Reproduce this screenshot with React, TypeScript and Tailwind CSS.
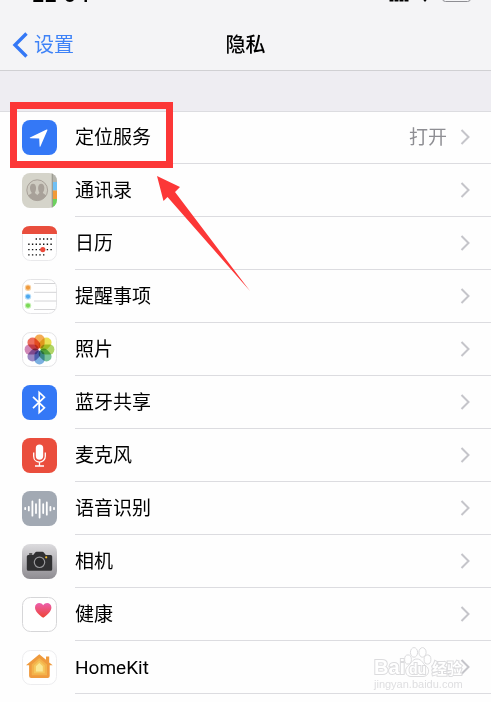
import type { ReactNode } from "react";

const tile = "h-[35px] w-[35px] shrink-0";

function LocationIcon() {
  return (
    <svg viewBox="0 0 35 35" className={tile}>
      <rect width="35" height="35" rx="8" fill="#3478f6" />
      <path d="M8 17.6 24.6 9.6Q25.8 9.2 25.3 10.5L18.4 26.4Q17.8 27.4 17.6 26.2L17.2 18.4 8.4 18.3Q7.2 18 8 17.6Z" fill="#fff" />
    </svg>
  );
}

function ContactsIcon() {
  return (
    <svg viewBox="0 0 35 35" className={tile}>
      <defs>
        <clipPath id="contacts-tile">
          <rect width="35" height="35" rx="8" />
        </clipPath>
      </defs>
      <g clipPath="url(#contacts-tile)">
        <rect width="35" height="35" fill="#d5d4ca" />
        <rect x="30.5" width="5" height="9" fill="#b5b5ad" />
        <rect x="30.5" y="9" width="5" height="8.5" fill="#6fc0f5" />
        <rect x="30.5" y="17.5" width="5" height="8.5" fill="#f19a38" />
        <rect x="30.5" y="26" width="5" height="9" fill="#6cd25e" />
        <path d="M30.3 0V35" stroke="#99998f" strokeWidth="1.2" />
      </g>
      <circle cx="15.2" cy="17.2" r="10.4" fill="#cfccc2" stroke="#a8a199" />
      <path
        d="M6.3 22.4C8 20.8 9.6 21 9.7 19.7 7.3 17 7.2 10.8 11 10.7 14.8 10.8 14.6 17 12.9 19.5 12.9 21 15 20.9 15.3 22.2 15.7 20.8 17.5 20.7 17.4 19.4 15.6 17 15.4 10.8 19.2 10.7 23 10.8 23.1 17 20.8 19.6 20.9 21 22.6 20.9 24.2 22.4 22.5 25.4 19.2 27.4 15.2 27.4 11.2 27.4 7.9 25.4 6.3 22.4Z"
        fill="#a8a199"
      />
      <path d="M15 11.5V20" stroke="#cfccc2" strokeWidth="1" />
    </svg>
  );
}

function CalendarIcon() {
  return (
    <svg viewBox="0 0 35 35" className={tile}>
      <rect x=".5" y=".5" width="34" height="34" rx="8" fill="#fff" stroke="#e9e9eb" />
      <path d="M0 8Q0 0 8 0H27Q35 0 35 8Z" fill="#e94e3d" />
      <g stroke="#111" strokeWidth="1.4" strokeDasharray="1.4 2.3">
        <path d="M13.6 13H30" />
        <path d="M6.2 18.3H30" />
        <path d="M6.2 23.6H30" />
        <path d="M6.2 28.9H23" />
      </g>
      <circle cx="20.8" cy="23.6" r="2.6" fill="#ec4b3c" />
    </svg>
  );
}

function RemindersIcon() {
  return (
    <svg viewBox="0 0 35 35" className={tile}>
      <rect x=".5" y=".5" width="34" height="34" rx="8" fill="#fff" stroke="#e4e4e6" />
      <path d="M12 4.5H33M12 13.3H34.5M12 22H34.5M12 30.5H33" stroke="#d4d4d6" />
      <circle cx="6" cy="8.7" r="3.2" fill="#f8d3a6" />
      <circle cx="6" cy="8.7" r="2.1" fill="#ef9a3d" />
      <circle cx="6" cy="17.6" r="3.2" fill="#b5ddf9" />
      <circle cx="6" cy="17.6" r="2.1" fill="#4ea9ef" />
      <circle cx="6" cy="26.6" r="3.2" fill="#c6f0b5" />
      <circle cx="6" cy="26.6" r="2.1" fill="#7bd957" />
    </svg>
  );
}

const petals = ["#f2a03c", "#e6dc3c", "#a5cf52", "#63b98a", "#6aa5dd", "#8c78bb", "#c978ae", "#ea5a47"];

function PhotosIcon() {
  return (
    <svg viewBox="0 0 35 35" className={tile}>
      <rect x=".5" y=".5" width="34" height="34" rx="8" fill="#fff" stroke="#e4e4e6" />
      <g className="isolate">
        {petals.map((color, i) => (
          <rect
            key={color}
            x="12.4"
            y="2.6"
            width="10.2"
            height="14"
            rx="5"
            fill={color}
            fillOpacity=".88"
            className="mix-blend-multiply"
            transform={`rotate(${i * 45} 17.5 17.5)`}
          />
        ))}
      </g>
      <circle cx="17.5" cy="17.5" r="1" fill="#fff" />
    </svg>
  );
}

function BluetoothIcon() {
  return (
    <svg viewBox="0 0 35 35" className={tile}>
      <rect width="35" height="35" rx="8" fill="#3478f6" />
      <path d="M11 11.8 22.4 22.8 17.2 27.6V7.4L22.4 12.2 11 23.2" fill="none" stroke="#fff" strokeWidth="1.7" />
    </svg>
  );
}

function MicrophoneIcon() {
  return (
    <svg viewBox="0 0 35 35" className={tile}>
      <rect width="35" height="35" rx="8" fill="#ea4e3d" />
      <rect x="13.8" y="6.4" width="7.4" height="15.4" rx="3.7" fill="#fff" />
      <path d="M11.7 14.5V18.2C11.7 26 23.3 26 23.3 18.2V14.5M17.5 24V27.8M13 28H22" fill="none" stroke="#fff" strokeWidth="1.3" />
    </svg>
  );
}

function SpeechIcon() {
  return (
    <svg viewBox="0 0 35 35" className={tile}>
      <rect width="35" height="35" rx="8" fill="#a2a9b3" />
      <path
        d="M3.2 17V18.2M6.8 15.8V19.4M10.4 10.5V24.7M14 13.2V22M17.6 8.6V26.6M21.2 13.2V22M24.8 11.5V23.7M28.4 15.8V19.4M32 17V18.2"
        stroke="#fff"
        strokeWidth="1.8"
        strokeLinecap="round"
      />
    </svg>
  );
}

function CameraIcon() {
  return (
    <svg viewBox="0 0 35 35" className={tile}>
      <defs>
        <linearGradient id="camera-tile" x2="0" y2="1">
          <stop stopColor="#dcdbde" />
          <stop offset="1" stopColor="#8e8c91" />
        </linearGradient>
      </defs>
      <rect width="35" height="35" rx="8" fill="url(#camera-tile)" />
      <rect x="7" y="9" width="3.4" height="2" rx=".8" fill="#555" />
      <path d="M6.3 11H11.2L13.2 8.4Q13.7 7.8 14.5 7.8H20.5Q21.3 7.8 21.8 8.4L23.8 11H28.7Q30.2 11 30.2 12.5V25.3Q30.2 26.8 28.7 26.8H6.3Q4.8 26.8 4.8 25.3V12.5Q4.8 11 6.3 11Z" fill="#303032" />
      <circle cx="17.5" cy="18.3" r="5.2" fill="#29292b" stroke="#98989b" strokeWidth="1.2" />
      <circle cx="24.2" cy="13.3" r="1.1" fill="#f5c02f" />
    </svg>
  );
}

function HealthIcon() {
  return (
    <svg viewBox="0 0 35 35" className={tile}>
      <defs>
        <linearGradient id="heart" x2="0" y2="1">
          <stop stopColor="#ec5fae" />
          <stop offset="1" stopColor="#ee4433" />
        </linearGradient>
      </defs>
      <rect x=".5" y=".5" width="34" height="34" rx="8" fill="#fff" stroke="#d6d6d8" />
      <path d="M21.2 20.8C17 17.6 13 14.4 13 10.4 13 5.4 19 4.4 21.2 8.2 23.4 4.4 29.4 5.4 29.4 10.4 29.4 14.4 25.4 17.6 21.2 20.8Z" fill="url(#heart)" />
    </svg>
  );
}

function HomeIcon() {
  return (
    <svg viewBox="0 0 35 35" className={tile}>
      <rect x=".5" y=".5" width="34" height="34" rx="8" fill="#fff" stroke="#ededef" />
      <path d="M17.3 4.2 24 9.8V6.4H27.2V12.4L30.7 15.2H27.7V26Q27.7 28 25.7 28H9.1Q7.1 28 7.1 26V15.2H4Z" fill="#ef9a3d" />
      <path d="M17.3 8 25 14.6V25.3H9.7V14.6Z" fill="#f3b24b" />
      <path d="M17.3 10.6 22.8 15.4V23.2H11.9V15.4Z" fill="#f6c65c" />
      <path d="M17.3 13 20.8 16.3V21.4H13.9V16.3Z" fill="#fae793" />
    </svg>
  );
}

function Chevron() {
  return (
    <svg viewBox="0 0 10 16" className="h-4 w-2.5 shrink-0" fill="none" stroke="#c5c5ca" strokeWidth="2">
      <path d="M1.5 1 8.5 8 1.5 15" />
    </svg>
  );
}

function Watermark() {
  return (
    <svg
      viewBox="0 0 100 50"
      className="pointer-events-none absolute top-1 right-6 h-[50px] w-[100px]"
      fill="#fff"
      stroke="#dcdcde"
      fontFamily='"Liberation Sans", "Noto Sans CJK SC", sans-serif'
    >
      <text x="7" y="29" fontSize="20" fontWeight="700" paintOrder="stroke" strokeWidth="2">
        Bai
      </text>
      <ellipse cx="41" cy="14.5" rx="3.4" ry="4.6" />
      <ellipse cx="47" cy="7.4" rx="3.6" ry="4.8" />
      <ellipse cx="55.5" cy="7.4" rx="3.6" ry="4.8" />
      <ellipse cx="60.5" cy="14.5" rx="3.4" ry="4.6" />
      <path d="M50 14C55 14 56 19 59.5 21.5 63.5 25 61.5 31.5 56 31.5H44C38.5 31.5 37 25 40.5 21.5 44 19 45 14 50 14Z" />
      <text x="42" y="29" fontSize="14" fontWeight="700" paintOrder="stroke" strokeWidth="2">
        du
      </text>
      <text x="65" y="29" fontSize="15" fontWeight="700" paintOrder="stroke" strokeWidth="2">
        经验
      </text>
      <text x="7" y="43" fontSize="11" fill="#dedee0" stroke="none">
        jingyan.baidu.com
      </text>
    </svg>
  );
}

type Item = { label: string; icon: ReactNode; value?: string };

const items: Item[] = [
  { label: "定位服务", icon: <LocationIcon />, value: "打开" },
  { label: "通讯录", icon: <ContactsIcon /> },
  { label: "日历", icon: <CalendarIcon /> },
  { label: "提醒事项", icon: <RemindersIcon /> },
  { label: "照片", icon: <PhotosIcon /> },
  { label: "蓝牙共享", icon: <BluetoothIcon /> },
  { label: "麦克风", icon: <MicrophoneIcon /> },
  { label: "语音识别", icon: <SpeechIcon /> },
  { label: "相机", icon: <CameraIcon /> },
  { label: "健康", icon: <HealthIcon /> },
  { label: "HomeKit", icon: <HomeIcon /> },
];

function StatusBar() {
  return (
    <div className="-mt-4 flex h-[18px] items-end justify-between pr-5 pl-8">
      <span className="font-[Inter] text-xl leading-[14px] font-semibold">22:04</span>
      <svg viewBox="0 0 84 18" className="h-[18px] w-[84px]">
        <path d="M4.5 13V17.5M9.5 10V17.5M14.5 7V17.5M19.5 4V17.5" stroke="#000" strokeWidth="4" />
        <path d="M30 8Q38 1 46 8L38 18Z" />
        <rect x="55.5" y="3.5" width="28" height="14" rx="3" fill="none" stroke="#8e8e93" />
      </svg>
    </div>
  );
}

export default function App() {
  return (
    <main className="relative h-screen overflow-hidden bg-[#fefefe] font-['Roboto','Noto_Sans_CJK_SC',sans-serif] text-black">
      <header className="border-b border-[#d0d0d3] bg-[#f4f4f6]">
        <StatusBar />
        <div className="grid h-[68px] grid-cols-3 items-center px-3 pt-[18px]">
          <button className="flex items-center gap-1.5 text-xl text-[#3f83f7]">
            <svg viewBox="0 0 16 26" className="h-[26px] w-4" fill="none" stroke="#3478f6" strokeWidth="3.4">
              <path d="M14.5 1.5 3 13 14.5 24.5" />
            </svg>
            设置
          </button>
          <h1 className="text-center text-xl font-medium">隐私</h1>
        </div>
      </header>

      <div className="h-10 bg-[#eeedf2]" />

      <ul className="shadow-[inset_0_1px_0_#dcdce0]">
        {items.map((item) => (
          <li key={item.label} className="relative">
            <button className="flex h-[53px] w-full items-center gap-[18px] pl-[22px] text-left text-[19px]">
              {item.icon}
              <span className="flex h-full grow items-center gap-[13px] border-b border-[#dcdce0] pr-[21px]">
                <span className="grow pt-0.5">{item.label}</span>
                {item.value && <span className="pt-0.5 text-[#8e8e93]">{item.value}</span>}
                <Chevron />
              </span>
            </button>
            {item.label === "HomeKit" && <Watermark />}
          </li>
        ))}
      </ul>

      <div className="pointer-events-none absolute top-[102px] left-2.5 h-[66px] w-[163px] border-7 border-[#fc3737]" />
      <svg viewBox="0 0 94 116" className="pointer-events-none absolute top-[176px] left-[157px] h-[116px] w-[94px]">
        <path d="M0 0 23 11 18 16 93 115 10.5 21 6.5 25Z" fill="#fc3737" />
      </svg>
    </main>
  );
}
